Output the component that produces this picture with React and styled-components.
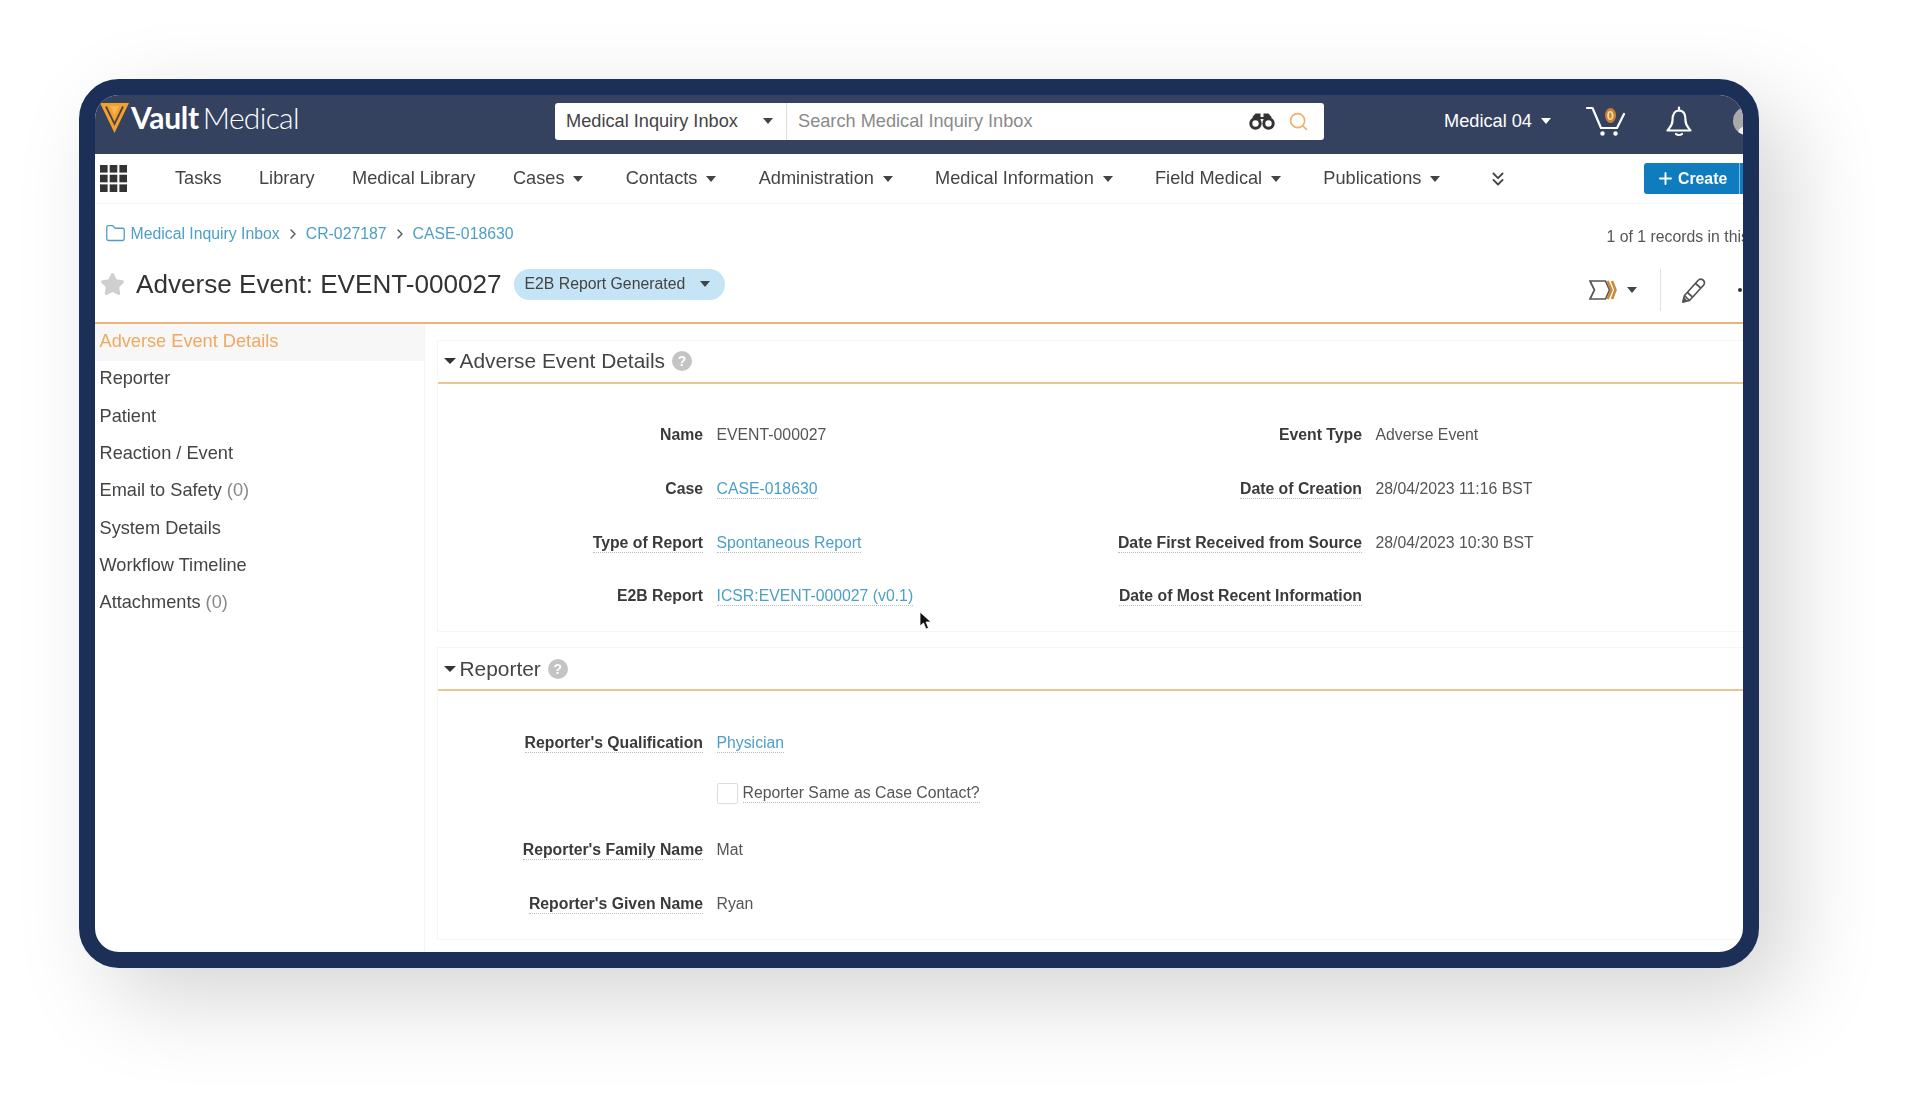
import React from "react";
import styled, { createGlobalStyle } from "styled-components";
import { ChevronRight, ChevronsDown, Folder, Plus, Search, Star } from "lucide-react";

const Global = createGlobalStyle`
  html, body { margin: 0; padding: 0; background: #fff; }
  body { font-family: "Liberation Sans", Arial, sans-serif; }
  * { box-sizing: border-box; }
`;

const Page = styled.div`
  width: 1907px;
  height: 1116px;
  padding: 78.5px 0 0 78.5px;
  overflow: hidden;
  background: #fff;
`;
const Frame = styled.div`
  position: relative;
  width: 1680px;
  height: 889.5px;
  border: 16px solid #1b2f57;
  border-radius: 40px;
  overflow: hidden;
  background: #fff;
  box-shadow: 30px 30px 90px rgba(0, 0, 0, 0.17);
`;
const Screen = styled.div`
  width: 1720px;
  height: 858px;
  filter: blur(0.55px);
`;
const Header = styled.header`
  display: flex;
  align-items: center;
  height: 59px;
  padding: 0 0 6px 5.5px;
  background: #34415f;
  color: #fff;
`;
const Logo = styled.div`
  display: flex;
  align-items: center;
  gap: 2px;
  width: 210px;
  margin-top: -7px;
  font-family: Lato, sans-serif;
  font-size: 30px;
  letter-spacing: -0.3px;
`;
const LogoSvg = styled.svg`
  flex: none;
`;
const LogoWord = styled.span`
  line-height: 30px;
  margin-top: -2px;
  white-space: nowrap;
`;
const LogoBold = styled.span`
  font-weight: 700;
  margin-right: 4px;
`;
const LogoLight = styled.span`
  font-weight: 300;
  letter-spacing: -0.7px;
`;
const SearchBox = styled.div`
  display: flex;
  align-items: center;
  width: 769px;
  height: 37px;
  margin-left: 245px;
  background: #fff;
  border-radius: 3px;
  font-size: 18.2px;
`;
const SearchScope = styled.div`
  display: flex;
  align-items: center;
  width: 232px;
  height: 100%;
  padding-left: 11px;
  color: #444;
  border-right: 1px solid #ddd;
`;
const SearchInput = styled.div`
  flex: 1;
  padding-left: 11px;
  color: #8a8a8a;
`;
const SearchIcons = styled.div`
  display: flex;
  align-items: center;
  gap: 13px;
  padding-right: 15px;
`;
const Caret = styled.span`
  display: inline-block;
  flex: none;
  width: 0;
  height: 0;
  margin-left: ${(p) => p.$gap ?? 9}px;
  margin-right: ${(p) => p.$after ?? 0}px;
  border-left: ${(p) => p.$size ?? 5.5}px solid transparent;
  border-right: ${(p) => p.$size ?? 5.5}px solid transparent;
  border-top: ${(p) => (p.$size ?? 5.5) + 0.5}px solid ${(p) => p.$color ?? "#444"};
`;
const HeaderRight = styled.div`
  display: flex;
  align-items: center;
  margin-left: 120px;
  font-size: 18.2px;
`;
const CartBox = styled.div`
  position: relative;
  width: 40px;
  height: 30px;
  margin-left: 35px;
`;
const CartCount = styled.span`
  position: absolute;
  left: 19px;
  top: 2px;
  width: 11px;
  height: 15px;
  border-radius: 50%;
  background: #c9802f;
  color: #f4d9b0;
  font-size: 13px;
  font-weight: 700;
  line-height: 15px;
  text-align: center;
`;
const BellBox = styled.div`
  display: flex;
  margin-left: 40px;
`;
const Avatar = styled.div`
  position: relative;
  overflow: hidden;
  width: 28px;
  height: 28px;
  margin-left: 41px;
  border-radius: 50%;
  background: #a9a9a9;
  &::after {
    content: "";
    position: absolute;
    left: 5px;
    top: 19px;
    width: 18px;
    height: 14px;
    border-radius: 50%;
    background: #f2f2f2;
  }
`;
const Nav = styled.nav`
  display: flex;
  align-items: center;
  height: 49px;
  margin-top: 1px;
  padding: 0 45.5px 0 5.5px;
  border-bottom: 1px solid #f3f3f3;
  color: #444;
  font-size: 18.2px;
`;
const NavItems = styled.div`
  display: flex;
  align-items: center;
  gap: 37.5px;
  margin-left: 48px;
`;
const NavItem = styled.span`
  display: flex;
  align-items: center;
`;
const MoreBox = styled.span`
  display: flex;
  margin-left: 42px;
`;
const CreateButton = styled.div`
  display: flex;
  align-items: center;
  flex: none;
  width: 125px;
  height: 31px;
  margin-left: auto;
  padding-left: 12px;
  gap: 3px;
  border-radius: 3px;
  background: #0e7cbf;
  color: #fff;
  font-size: 15.8px;
  font-weight: 700;
`;
const CreateSplit = styled.span`
  width: 1px;
  height: 100%;
  margin-left: 9px;
  background: #7cc0e6;
`;
const Crumbs = styled.div`
  display: flex;
  align-items: center;
  height: 62px;
  padding: 0 0 2px 10px;
  font-size: 15.8px;
  color: #4c9fc7;
`;
const CrumbLink = styled.span`
  margin-left: ${(p) => p.$gap ?? 0}px;
`;
const CrumbSep = styled.span`
  display: flex;
  margin-left: 5px;
  color: #555;
`;
const RecordCount = styled.span`
  margin-left: 1093px;
  padding-top: 7px;
  color: #555;
  white-space: nowrap;
`;
const TitleRow = styled.div`
  display: flex;
  align-items: center;
  height: 58px;
  padding: 0 0 19px 5.5px;
  border-bottom: 2px solid #e8b47c;
`;
const Title = styled.h1`
  margin: 0 0 0 11px;
  font-size: 26.1px;
  font-weight: 400;
  color: #333;
  white-space: nowrap;
`;
const Pill = styled.div`
  display: flex;
  align-items: center;
  width: 211px;
  height: 31px;
  margin-left: 12px;
  padding-left: 11px;
  border-radius: 16px;
  background: #c5e4f5;
  color: #444;
  font-size: 15.8px;
  white-space: nowrap;
`;
const TitleActions = styled.div`
  display: flex;
  align-items: center;
  height: 42px;
  margin-left: 864px;
  position: relative;
  top: 6px;
`;
const ActionDivider = styled.span`
  width: 1px;
  height: 42px;
  margin: 0 20px 0 23px;
  background: #e2e2e2;
`;
const Dot = styled.span`
  width: 4px;
  height: 4px;
  margin-left: 32px;
  border-radius: 50%;
  background: #333;
`;
const Body = styled.div`
  display: flex;
`;
const Sidebar = styled.aside`
  flex: none;
  width: 330.5px;
  height: 640px;
  border-right: 1px solid #f4f4f4;
`;
const SideItem = styled.div`
  display: flex;
  align-items: center;
  height: 37.3px;
  padding: 0 0 1px 5px;
  font-size: 18.2px;
  color: ${(p) => (p.$active ? "#f0a860" : "#444")};
  background: ${(p) => (p.$active ? "#f7f7f7" : "transparent")};
`;
const SideCount = styled.span`
  margin-left: 5px;
  color: #888;
`;
const Main = styled.main`
  padding: 16px 0 0 11.5px;
`;
const Card = styled.section`
  width: 1310px;
  margin-bottom: 15.5px;
  padding-bottom: 7px;
  border: 1px solid #f5f5f5;
  border-right: 0;
`;
const CardHeader = styled.div`
  display: flex;
  align-items: center;
  height: 43px;
  padding-left: 6px;
  border-bottom: 2px solid #eac792;
  color: #444;
  font-size: 20.9px;
`;
const CardTitle = styled.span`
  margin-left: 4px;
`;
const HelpBadge = styled.span`
  display: flex;
  align-items: center;
  justify-content: center;
  width: 20px;
  height: 20px;
  margin-left: 7px;
  border-radius: 50%;
  background: #c4c4c4;
  color: #fff;
  font-size: 14px;
  font-weight: 700;
`;
const Fields = styled.div`
  display: grid;
  grid-template-columns: 265.5px 300px 332px 1fr;
  grid-auto-rows: 53.7px;
  column-gap: 13.5px;
  padding-top: 25.5px;
  font-size: 15.8px;
`;
const FieldLabel = styled.div`
  display: flex;
  align-items: center;
  justify-content: flex-end;
  font-weight: 700;
  color: #3a3a3a;
`;
const Dotted = styled.span`
  border-bottom: ${(p) => (p.$on ? "1px dotted #bdbdbd" : "1px solid transparent")};
  white-space: nowrap;
`;
const FieldValue = styled.div`
  display: flex;
  align-items: center;
  color: ${(p) => (p.$link ? "#4c9fc7" : "#555")};
  white-space: nowrap;
`;
const CheckRow = styled.div`
  grid-column: 2 / 5;
  display: flex;
  align-items: center;
  gap: 5px;
  padding-bottom: 7px;
  color: #555;
`;
const CheckBox = styled.span`
  width: 21px;
  height: 21px;
  border: 1px solid #dcdcdc;
  border-radius: 2px;
`;
const Pointer = styled.svg`
  position: absolute;
  left: 824px;
  top: 516px;
`;

const navItems = [
  ["Tasks"], ["Library"], ["Medical Library"], ["Cases", 1], ["Contacts", 1],
  ["Administration", 1], ["Medical Information", 1], ["Field Medical", 1], ["Publications", 1],
];
const sideItems = [
  ["Adverse Event Details"], ["Reporter"], ["Patient"], ["Reaction / Event"], ["Email to Safety", "(0)"],
  ["System Details"], ["Workflow Timeline"], ["Attachments", "(0)"],
];

const LogoMark = () => (
  <LogoSvg width="29" height="30" viewBox="0 0 29 30">
    <path d="M0 0H29L14.5 30Z" fill="#f2a02e" />
    <path d="M6 3.5L14.5 21L23 3.5" fill="none" stroke="#4a4447" strokeWidth="1.8" />
    <path d="M10 3H19L14.5 12.5Z" fill="#f7b452" />
  </LogoSvg>
);
const Binoculars = () => (
  <svg width="26" height="18" viewBox="0 0 26 18" fill="none" stroke="#333" strokeWidth="3">
    <circle cx="6.5" cy="11.5" r="4.7" />
    <circle cx="19.5" cy="11.5" r="4.7" />
    <path d="M4 6L7 2.5H10.5V8M22 6L19 2.5H15.5V8M10.5 6H15.5" fill="#333" strokeWidth="2" />
  </svg>
);
const Cart = () => (
  <svg width="40" height="30" viewBox="0 0 40 30" fill="none" stroke="#fff" strokeWidth="2.2" strokeLinecap="round" strokeLinejoin="round">
    <path d="M1 2H6.5L15 22H31L38 8" />
    <circle cx="16.5" cy="27.5" r="2.2" fill="#fff" stroke="none" />
    <circle cx="29.5" cy="27.5" r="2.2" fill="#fff" stroke="none" />
  </svg>
);
const BellIcon = () => (
  <svg width="26" height="31" viewBox="0 0 26 31" fill="none" stroke="#fff" strokeWidth="2.2" strokeLinejoin="round" strokeLinecap="round">
    <path d="M13 4.5C7.5 4.5 6.5 9.5 6.5 14.5C6.5 19.5 3.5 21.5 1.5 24.5H24.5C22.5 21.5 19.5 19.5 19.5 14.5C19.5 9.5 18.5 4.5 13 4.5Z" />
    <path d="M13 1.5V4.5" />
    <path d="M10 28C11.5 29.3 14.5 29.3 16 28" />
  </svg>
);
const GridIcon = () => (
  <svg width="27" height="27" viewBox="0 0 27 27" fill="#333">
    {[0, 9.7, 19.4].flatMap((y) => [0, 9.7, 19.4].map((x) => <rect key={`${x}-${y}`} x={x} y={y} width="7.6" height="7.6" />))}
  </svg>
);
const Workflow = () => (
  <svg width="28" height="20" viewBox="0 0 28 20" fill="none" strokeWidth="1.7">
    <path d="M1 1H16.5L20.5 10L16.5 19H1L5.5 10Z" stroke="#555" />
    <path d="M18.5 1L22.5 10L18.5 19" stroke="#c98a3d" strokeWidth="2.6" />
    <path d="M23 1L26.5 10L23 19" stroke="#c98a3d" strokeWidth="2.6" />
  </svg>
);
const PencilIcon = () => (
  <svg width="25" height="27" viewBox="0 0 25 27" fill="none" stroke="#555" strokeWidth="1.7" strokeLinejoin="round">
    <path d="M2 25L3.5 18.5L17 3.5C18.5 1.8 20.5 1.8 22 3C23.8 4.4 24 6.5 22.5 8.2L8.5 23.5Z" />
    <path d="M3.5 18.5L8.5 23.5M14.5 6.5L19.8 11M6.5 15.5L11.5 20" />
    <path d="M2 25L3 21L5.5 23.8Z" fill="#555" />
  </svg>
);
const Help = () => <HelpBadge>?</HelpBadge>;

const Field = ({ label, dotted, value, link }) => (
  <>
    <FieldLabel><Dotted $on={dotted}>{label}</Dotted></FieldLabel>
    <FieldValue $link={link}>{value && <Dotted $on={link}>{value}</Dotted>}</FieldValue>
  </>
);

export default function App() {
  return (
    <Page>
      <Global />
      <Frame>
        <Screen>
          <Header>
            <Logo>
              <LogoMark />
              <LogoWord><LogoBold>Vault</LogoBold><LogoLight>Medical</LogoLight></LogoWord>
            </Logo>
            <SearchBox>
              <SearchScope>Medical Inquiry Inbox<Caret $gap={25} /></SearchScope>
              <SearchInput>Search Medical Inquiry Inbox</SearchInput>
              <SearchIcons>
                <Binoculars />
                <Search size={21} color="#eeb06a" strokeWidth={1.8} />
              </SearchIcons>
            </SearchBox>
            <HeaderRight>
              Medical 04<Caret $gap={9} $color="#fff" />
              <CartBox><Cart /><CartCount>0</CartCount></CartBox>
              <BellBox><BellIcon /></BellBox>
              <Avatar />
            </HeaderRight>
          </Header>
          <Nav>
            <GridIcon />
            <NavItems>
              {navItems.map(([t, c]) => (
                <NavItem key={t}>{t}{c && <Caret $after={4.7} />}</NavItem>
              ))}
            </NavItems>
            <MoreBox><ChevronsDown size={22} color="#444" strokeWidth={2} /></MoreBox>
            <CreateButton>
              <Plus size={19} strokeWidth={2.4} />Create<CreateSplit />
            </CreateButton>
          </Nav>
          <Crumbs>
            <Folder size={21} strokeWidth={1.5} color="#4c9fc7" />
            <CrumbLink $gap={5}>Medical Inquiry Inbox</CrumbLink>
            <CrumbSep><ChevronRight size={16} strokeWidth={2} /></CrumbSep>
            <CrumbLink $gap={5}>CR-027187</CrumbLink>
            <CrumbSep><ChevronRight size={16} strokeWidth={2} /></CrumbSep>
            <CrumbLink $gap={5}>CASE-018630</CrumbLink>
            <RecordCount>1 of 1 records in this</RecordCount>
          </Crumbs>
          <TitleRow>
            <Star size={25} fill="#cfcfcf" color="#cfcfcf" />
            <Title>Adverse Event: EVENT-000027</Title>
            <Pill>E2B Report Generated<Caret $gap={15} /></Pill>
            <TitleActions>
              <Workflow />
              <Caret $gap={10} />
              <ActionDivider />
              <PencilIcon />
              <Dot />
            </TitleActions>
          </TitleRow>
          <Body>
            <Sidebar>
              {sideItems.map(([t, c], i) => (
                <SideItem key={t} $active={i === 0}>{t}{c && <SideCount>{c}</SideCount>}</SideItem>
              ))}
            </Sidebar>
            <Main>
              <Card>
                <CardHeader><Caret $gap={0} $size={6} $color="#333" /><CardTitle>Adverse Event Details</CardTitle><Help /></CardHeader>
                <Fields>
                  <Field label="Name" value="EVENT-000027" />
                  <Field label="Event Type" value="Adverse Event" />
                  <Field label="Case" value="CASE-018630" link />
                  <Field label="Date of Creation" dotted value="28/04/2023 11:16 BST" />
                  <Field label="Type of Report" dotted value="Spontaneous Report" link />
                  <Field label="Date First Received from Source" dotted value="28/04/2023 10:30 BST" />
                  <Field label="E2B Report" value="ICSR:EVENT-000027 (v0.1)" link />
                  <Field label="Date of Most Recent Information" dotted />
                </Fields>
              </Card>
              <Card>
                <CardHeader><Caret $gap={0} $size={6} $color="#333" /><CardTitle>Reporter</CardTitle><Help /></CardHeader>
                <Fields>
                  <Field label="Reporter's Qualification" dotted value="Physician" link />
                  <FieldLabel />
                  <FieldValue />
                  <FieldLabel />
                  <CheckRow><CheckBox /><Dotted $on>Reporter Same as Case Contact?</Dotted></CheckRow>
                  <Field label="Reporter's Family Name" dotted value="Mat" />
                  <FieldLabel />
                  <FieldValue />
                  <Field label="Reporter's Given Name" dotted value="Ryan" />
                </Fields>
              </Card>
            </Main>
          </Body>
        </Screen>
        <Pointer width="13" height="19" viewBox="0 0 13 19">
          <path d="M1 1V15L4.5 12L7 18L9.5 17L7 11H12Z" fill="#111" stroke="#fff" strokeWidth="0.8" />
        </Pointer>
      </Frame>
    </Page>
  );
}
